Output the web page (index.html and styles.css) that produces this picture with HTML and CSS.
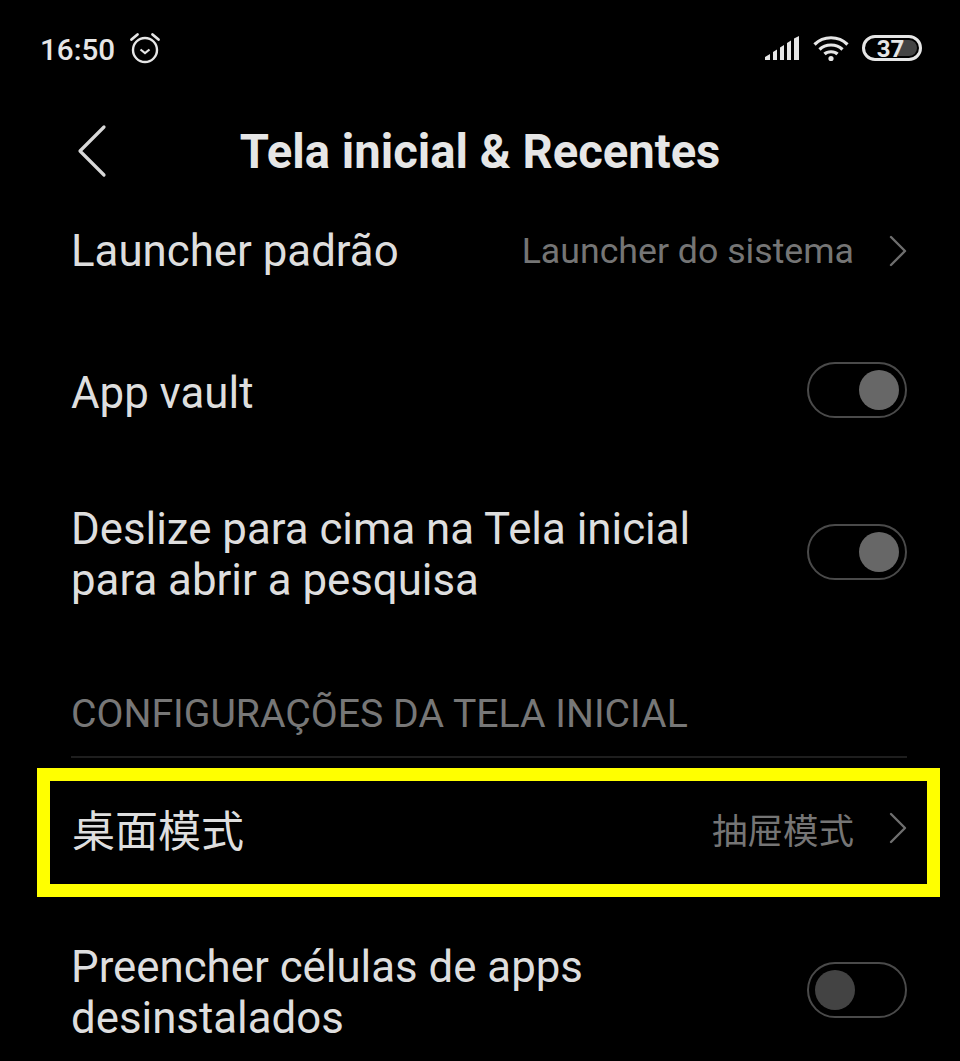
FILE: index.html
```html
<!DOCTYPE html>
<html lang="pt">
<head>
<meta charset="utf-8">
<title>Tela inicial &amp; Recentes</title>
<link rel="stylesheet" href="styles.css">
</head>
<body>
<div class="screen">
  <div class="status">
    <div class="status-left">
      <span class="time">16:50</span>
      <svg class="alarm" viewBox="0 0 32 32" width="32" height="32" fill="none" stroke="#e6e6e6" stroke-width="2.4">
        <circle cx="16" cy="18" r="12"/>
        <path d="M11.5 17.5l4.5 3.5 4.5-3.5" stroke-width="2.2"/>
        <path d="M2.5 7.5L8.5 2.5M29.5 7.5L23.5 2.5" stroke-width="2.8" stroke-linecap="round"/>
      </svg>
    </div>
    <div class="status-right">
      <svg class="signal" viewBox="0 0 36 26" width="36" height="26" fill="#e6e6e6">
        <path d="M0 25v-3l5-3v6zM8 25v-8l4-2.500v10.500zM15 25V12.500l4-2.500v15zM22 25V8l4-2.500V25zM29 25V3.500L34 1v24z"/>
      </svg>
      <svg class="wifi" viewBox="0 0 36 28" width="36" height="28" fill="none" stroke="#e6e6e6" stroke-width="3.200">
        <path d="M1.500 10.500C10.500 1.500 25.500 1.500 34.500 10.500"/>
        <path d="M6.500 15.500C12.500 9.500 23.500 9.500 29.500 15.500"/>
        <path d="M11.500 20C14.500 17 21.500 17 24.500 20"/>
        <circle cx="18" cy="24.500" r="2.600" fill="#e6e6e6" stroke="none"/>
      </svg>
      <div class="battery"><span class="battery-fill"></span><span class="battery-num">37</span></div>
    </div>
  </div>

  <header class="titlebar">
    <svg class="back" viewBox="0 0 30 54" width="30" height="54" fill="none" stroke="#d8d8d8" stroke-width="3.200" stroke-linecap="round" stroke-linejoin="round">
      <path d="M27 3L3 27l24 24"/>
    </svg>
    <h1>Tela inicial &amp; Recentes</h1>
  </header>

  <div class="row row-launcher">
    <span class="label">Launcher padrão</span>
    <span class="value">Launcher do sistema</span>
    <svg class="chev" viewBox="0 0 18 32" width="18" height="32" fill="none" stroke="#6e6e6e" stroke-width="2.400" stroke-linecap="round" stroke-linejoin="round"><path d="M2 2l14 14L2 30"/></svg>
  </div>

  <div class="row row-vault">
    <span class="label">App vault</span>
    <span class="toggle on"></span>
  </div>

  <div class="row row-swipe">
    <span class="label">Deslize para cima na Tela inicial<br>para abrir a pesquisa</span>
    <span class="toggle on"></span>
  </div>

  <div class="section">CONFIGURAÇÕES DA TELA INICIAL</div>

  <div class="row row-mode">
    <span class="label cjk">桌面模式</span>
    <span class="value cjk">抽屉模式</span>
    <svg class="chev" viewBox="0 0 18 32" width="18" height="32" fill="none" stroke="#6e6e6e" stroke-width="2.400" stroke-linecap="round" stroke-linejoin="round"><path d="M2 2l14 14L2 30"/></svg>
    <span class="highlight"></span>
  </div>

  <div class="row row-fill">
    <span class="label">Preencher células de apps<br>desinstalados</span>
    <span class="toggle off"></span>
  </div>
</div>
</body>
</html>
```
FILE: styles.css
```css
html, body {
  margin: 0;
  padding: 0;
  background: #000;
}
.screen {
  width: 960px;
  height: 1061px;
  overflow: hidden;
  background: #000;
  font-family: Roboto, "Noto Sans CJK SC", sans-serif;
  color: #e6e6e6;
}
.status {
  height: 100px;
  box-sizing: border-box;
  padding: 32px 38px 0 40px;
  display: flex;
  justify-content: space-between;
  align-items: flex-start;
}
.status-left {
  display: flex;
  align-items: center;
  gap: 14px;
}
.alarm {
  margin-top: -4px;
}
.time {
  font-size: 29.6px;
  font-weight: 500;
  line-height: 36px;
}
.status-right {
  display: flex;
  align-items: center;
  gap: 13px;
  height: 34px;
}
.signal {
  margin-right: -1px;
  margin-left: 1px;
  margin-top: -2px;
}
.wifi {
  margin-top: -2px;
}
.battery {
  position: relative;
  width: 60px;
  height: 26px;
  box-sizing: border-box;
  border: 3px solid #e6e6e6;
  border-radius: 13px;
  display: flex;
  align-items: center;
  justify-content: center;
  margin-top: -2px;
}
.battery-fill {
  position: absolute;
  top: 2px;
  right: 2px;
  bottom: 2px;
  width: 19px;
  background: #444;
  border-radius: 0 9px 9px 0;
}
.battery-num {
  position: relative;
  font-size: 24px;
  font-weight: 700;
  line-height: 20px;
  margin-right: 3px;
  margin-top: 1px;
}
.titlebar {
  height: 100px;
  position: relative;
  display: flex;
  align-items: center;
  justify-content: center;
}
.back {
  position: absolute;
  left: 77px;
  top: 24px;
}
h1 {
  margin: 4px 0 0;
  font-size: 47.2px;
  font-weight: 700;
  line-height: 96px;
  color: #e6e6e6;
}
.row {
  display: flex;
  align-items: center;
  padding: 0 53px 0 71px;
  position: relative;
}
.label {
  flex: 1;
  font-size: 43.8px;
  line-height: 51px;
  color: #dedede;
}
.value {
  font-size: 35.7px;
  color: #757575;
  margin-right: 35px;
}
.row-launcher { height: 102px; }
.row-vault { height: 183px; }
.row-vault .toggle { margin-bottom: 8px; }
.row-swipe { height: 136px; }
.row-swipe .label { padding-top: 4px; }
.row-swipe .toggle { margin-bottom: 2px; }
.row-mode { height: 140px; }
.row-fill { height: 184px; }
.row-fill .label { padding-top: 6px; }
.cjk {
  font-family: "Noto Sans CJK SC", sans-serif;
}
.label.cjk { font-size: 43px; font-weight: 400; padding-left: 1px; }
.value.cjk { font-size: 35.5px; font-weight: 400; }
.section {
  margin: 0 53px 0 71px;
  height: 137px;
  padding-top: 69px;
  box-sizing: border-box;
  border-bottom: 2px solid #1e1e1e;
  font-size: 39.2px;
  line-height: 48px;
  color: #777;
}
.toggle {
  position: relative;
  width: 100px;
  height: 56px;
  box-sizing: border-box;
  border: 2px solid #4a4a4a;
  border-radius: 28px;
  flex: none;
}
.toggle::after {
  content: "";
  position: absolute;
  top: 6px;
  width: 40px;
  height: 40px;
  border-radius: 50%;
}
.toggle.on::after {
  right: 6px;
  background: #676767;
}
.toggle.off::after {
  left: 6px;
  background: #434343;
}
.highlight {
  position: absolute;
  left: 37px;
  right: 20px;
  top: 10px;
  height: 129px;
  box-sizing: border-box;
  border: 13px solid #ff0;
  pointer-events: none;
}
```
